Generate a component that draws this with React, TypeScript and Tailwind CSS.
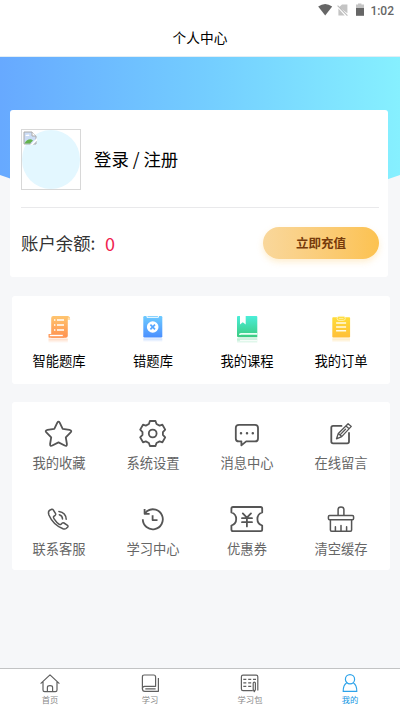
import type { ReactNode } from 'react';

interface MenuItem {
    label: string;
    icon: ReactNode;
}

interface TabItem extends MenuItem {
    active?: boolean;
}

const shortcuts: MenuItem[] = [
    {
        label: '智能题库',
        icon: (
            <svg width="40" height="32" viewBox="0 0 40 32">
                <defs>
                    <linearGradient id="orange" x1="0" y1="0" x2="0" y2="1">
                        <stop offset="0" stopColor="#ffc56f" />
                        <stop offset="1" stopColor="#ff914f" />
                    </linearGradient>
                    <linearGradient id="orangeFade" x1="0" y1="0" x2="0" y2="1">
                        <stop offset="0" stopColor="#ff914f" stopOpacity="0.35" />
                        <stop offset="1" stopColor="#ff914f" stopOpacity="0" />
                    </linearGradient>
                </defs>
                <path d="M9.5 24.6H28.8V29H9.5Z" fill="url(#orangeFade)" />
                <path d="M12.2 4Q12.2 2 14.2 2H29Q31.2 2.4 31.2 5.4H28.8V21.7Q28.8 23.7 26.8 23.7H12.2Z" fill="url(#orange)" />
                <path d="M28.8 5.4V3.6Q31 3 31.2 5.4Z" fill="#ffe0ad" />
                <rect x="9.5" y="20" width="15.8" height="3.7" rx="0.6" fill="#ff9a5b" />
                <path d="M10.8 21.5H23.8" stroke="#fff" strokeWidth="1.3" />
                <path d="M15 6h1.4M18 6h7M15 11h1.4M18 11h7M15 16h1.4M18 16h7" stroke="#fff" strokeWidth="1.6" />
            </svg>
        ),
    },
    {
        label: '错题库',
        icon: (
            <svg width="40" height="32" viewBox="0 0 40 32">
                <defs>
                    <linearGradient id="blue" x1="0" y1="0" x2="0" y2="1">
                        <stop offset="0" stopColor="#6ecbff" />
                        <stop offset="1" stopColor="#4a8fff" />
                    </linearGradient>
                    <linearGradient id="blueFade" x1="0" y1="0" x2="0" y2="1">
                        <stop offset="0" stopColor="#4a8fff" stopOpacity="0.3" />
                        <stop offset="1" stopColor="#4a8fff" stopOpacity="0" />
                    </linearGradient>
                </defs>
                <path d="M10.3 24.4H29.3V28H10.3Z" fill="url(#blueFade)" />
                <rect x="10.3" y="2" width="19" height="21.5" rx="1.2" fill="url(#blue)" />
                <path d="M14 2V3.3H25.4V2" fill="none" stroke="#fff" strokeWidth="1" />
                <circle cx="19.7" cy="13" r="5.8" fill="#fff" />
                <path d="M17.4 10.7L22 15.3M22 10.7L17.4 15.3" stroke="#58a7ff" strokeWidth="1.7" />
            </svg>
        ),
    },
    {
        label: '我的课程',
        icon: (
            <svg width="40" height="32" viewBox="0 0 40 32">
                <defs>
                    <linearGradient id="green" x1="0" y1="0" x2="0" y2="1">
                        <stop offset="0" stopColor="#4beed9" />
                        <stop offset="1" stopColor="#3bcb80" />
                    </linearGradient>
                    <linearGradient id="greenFade" x1="0" y1="0" x2="0" y2="1">
                        <stop offset="0" stopColor="#3bcb80" stopOpacity="0.4" />
                        <stop offset="1" stopColor="#3bcb80" stopOpacity="0" />
                    </linearGradient>
                </defs>
                <path d="M10 24.4H30.3V29.5H10Z" fill="url(#greenFade)" />
                <path d="M13 26.3H30.3" stroke="#fff" strokeWidth="1" />
                <path d="M11 2H29.3Q30.3 2 30.3 3V23.3H11.5Q10 23.3 10 21.8V3Q10 2 11 2Z" fill="url(#green)" />
                <path d="M13 2H18.7V10.4L15.8 8.2L13 10.4Z" fill="#fff" />
                <path d="M30.3 19.8H14Q12.8 19.8 12.8 21" stroke="#e9fff5" strokeWidth="1.7" fill="none" />
            </svg>
        ),
    },
    {
        label: '我的订单',
        icon: (
            <svg width="40" height="32" viewBox="0 0 40 32">
                <defs>
                    <linearGradient id="yellow" x1="0" y1="0" x2="0" y2="1">
                        <stop offset="0" stopColor="#ffdc38" />
                        <stop offset="1" stopColor="#ffbf38" />
                    </linearGradient>
                    <linearGradient id="yellowFade" x1="0" y1="0" x2="0" y2="1">
                        <stop offset="0" stopColor="#ffbf38" stopOpacity="0.35" />
                        <stop offset="1" stopColor="#ffbf38" stopOpacity="0" />
                    </linearGradient>
                </defs>
                <path d="M11.3 24.4H29V28.5H11.3Z" fill="url(#yellowFade)" />
                <rect x="11.3" y="3.2" width="17.8" height="20.4" rx="0.8" fill="url(#yellow)" />
                <rect x="16.1" y="2.4" width="8.2" height="4" rx="2" fill="#ffdc38" stroke="#fff3b8" strokeWidth="0.9" />
                <path d="M17.9 4.4h4.6" stroke="#fff3b8" strokeWidth="0.8" />
                <path d="M15.1 9H25.1M15.1 13H25.1M15.1 16.8H25.1" stroke="#fffbe6" strokeWidth="1.4" />
            </svg>
        ),
    },
];

const services: MenuItem[] = [
    {
        label: '我的收藏',
        icon: (
            <path d="M16.3 5.6Q17.5 3.6 18.7 5.6L21.7 11.9L28.5 12.9Q31.6 13.6 29.4 15.7L24.8 20.4L25.9 27Q26.1 29.7 23.7 28.5L17.5 25.4L11.3 28.5Q8.9 29.7 9.1 27L10.2 20.4L5.6 15.7Q3.4 13.6 6.5 12.9L13.3 11.9Z" />
        ),
    },
    {
        label: '系统设置',
        icon: (
            <g transform="translate(17.7 16.5)">
                <path d="M-3.8 -9.5L-2.8 -12.5H2.8L3.8 -9.5L6.9 -7.9L9.7 -8.8L12.5 -3.9L10.2 -1.4V1.4L12.5 3.9L9.7 8.8L6.9 7.9L3.8 9.5L2.8 12.5H-2.8L-3.8 9.5L-6.9 7.9L-9.7 8.8L-12.5 3.9L-10.2 1.4V-1.4L-12.5 -3.9L-9.7 -8.8L-6.9 -7.9Z" />
                <circle r="3.9" />
            </g>
        ),
    },
    {
        label: '消息中心',
        icon: (
            <>
                <path d="M10 7.8H26Q29 7.8 29 10.8V21.4Q29 24.4 26 24.4H17.2L12.4 28.4V24.4H10Q6.8 24.4 6.8 21.4V10.8Q6.8 7.8 10 7.8Z" />
                <path d="M12 16.2h.01M18 16.2h.01M23.8 16.2h.01" strokeWidth="2.5" />
            </>
        ),
    },
    {
        label: '在线留言',
        icon: (
            <>
                <path d="M18.5 8.9H10.1Q8.3 8.9 8.3 10.7V24.6Q8.3 26.4 10.1 26.4H24.2Q26 26.4 26 24.6V16" />
                <path d="M13.5 21.8L15.3 16.5L25.1 6.7L28.3 9.4L18.7 19.6ZM15.3 16.5L18.7 19.6M22.9 8.9L26.2 11.7M17.5 17.4L22.5 12.3" strokeWidth="1.3" />
            </>
        ),
    },
    {
        label: '联系客服',
        icon: (
            <g strokeWidth="1.5" transform="translate(-0.5 0)">
                <path d="M9.2 7.2L11.3 6.3Q12.3 6.1 12.8 7L15.1 10.6Q15.5 11.6 14.7 12.3L13 13.7Q12.8 14.6 13.6 15.8Q15.9 19.3 18.8 21.4Q19.8 21.9 20.6 21.2L21.8 20Q22.5 19.4 23.5 20L27 22.3Q28 23.1 27.3 24L25.6 25.5Q24.4 26.4 22.5 25.8Q12.5 21.7 8.4 12Q7.2 8.6 9.2 7.2Z" />
                <path d="M18.8 11.7Q22 12.6 22 16M18.4 8.4Q25.4 9.3 25.7 16.3" />
            </g>
        ),
    },
    {
        label: '学习中心',
        icon: (
            <g strokeLinecap="butt">
                <path d="M7.8 16.3A10 10 0 1 0 12.2 8L9.8 10.4" />
                <path d="M9.6 6V10.8H14.6" />
                <path d="M17.6 12.3V17.1H22.5" />
            </g>
        ),
    },
    {
        label: '优惠券',
        icon: (
            <>
                <path d="M4 4H31.6Q33.2 4 33.2 5.6V9.5Q28.4 11 28.4 16Q28.4 21 33.2 22.5V26.6Q33.2 28.2 31.6 28.2H4Q2.4 28.2 2.4 26.6V22.5Q7.2 21 7.2 16Q7.2 11 2.4 9.5V5.6Q2.4 4 4 4Z" />
                <path d="M13.8 10.4L17.9 14.7L22 10.4M13 15.2H23M13 19.2H23M17.9 14.7V23.4" />
            </>
        ),
    },
    {
        label: '清空缓存',
        icon: (
            <g strokeWidth="1.5" transform="translate(0.4 0)">
                <path d="M14.7 12.3V6.6Q14.7 4 17.6 4Q20.5 4 20.5 6.6V12.3" />
                <rect x="5" y="12.5" width="25.2" height="4.2" rx="1.2" />
                <path d="M7 16.8V27Q7 28.2 8.2 28.2H27Q28.2 28.2 28.2 27V16.8M12 28V23.8M17.6 28V22.6M23.2 28V23.8" />
            </g>
        ),
    },
];

const tabs: TabItem[] = [
    {
        label: '首页',
        icon: <path d="M2.6 10.6L12 1.9L21.4 10.6M5 8.6V17Q5 18.6 6.6 18.6H17.4Q19 18.6 19 17V8.6M9.4 18.4V14.4Q9.4 12.6 12 12.6Q14.6 12.6 14.6 14.4V18.4" />,
    },
    {
        label: '学习',
        icon: (
            <>
                <path d="M6.2 2H15.6Q17.6 2 17.6 4V13.3H6.6Q4.4 13.3 4.4 15.5V4Q4.4 2 6.2 2Z" />
                <path d="M4.4 15.4Q4.4 18.3 6.8 18.3H20.4V5M7.3 15.8H17.6" />
            </>
        ),
    },
    {
        label: '学习包',
        icon: (
            <>
                <path d="M14.8 17.6H5Q3.4 17.6 3.4 16V3.8Q3.4 2.2 5 2.2H18.2Q19.8 2.2 19.8 3.8V17.6" />
                <path d="M5.3 6.4h3M10.2 6.4h3M15 6.4h3M5.3 9.9h3M10.2 9.9h3M5.3 13.4h3M10.2 13.4h3" />
                <path d="M15.2 10.3Q15.2 9.2 16.3 9.2Q17.4 9.2 17.4 10.3V16.6L16.3 18.6L15.2 16.6Z" />
            </>
        ),
    },
    {
        label: '我的',
        icon: (
            <>
                <circle cx="12" cy="6.2" r="4.6" />
                <path d="M8.6 10.1Q5.2 12 5.2 18.4H18.8Q18.8 12 15.4 10.1" />
            </>
        ),
        active: true,
    },
];

function StatusBar() {
    return (
        <div className="flex h-5 items-center justify-end pr-[6px] text-[#666]">
            <svg width="48" height="14" viewBox="0 0 48 14" className="mr-1">
                <path d="M0.2 3.6Q7.2 -1.4 14.2 3.6L7.2 12.6Z" fill="#666" />
                <path d="M21 4.3L24 1.4H29.4V10.2ZM20.4 5.6L26.7 12.4H20.4Z" fill="#c4c4c4" />
                <path d="M19.6 2.6L29.4 12.6" stroke="#bbb" strokeWidth="1.1" />
                <path d="M40 0.4H43.4V1.6H46V5H38V1.6H40Z" fill="#c4c4c4" />
                <rect x="38" y="5" width="8" height="7.8" fill="#666" />
            </svg>
            <span className="pt-px font-[Roboto,sans-serif] text-[12px] leading-5 font-medium">1:02</span>
        </div>
    );
}

function BrokenImage() {
    return (
        <svg width="14" height="14" viewBox="0 0 14 14">
            <path d="M1 1H9L13 5V13H1Z" fill="#cbdcf5" stroke="#aaa" />
            <path d="M9 1V5H13" fill="#fff" stroke="#aaa" />
            <path d="M2.4 5Q3 3.2 4.4 3.8Q6 3 6.5 5Z" fill="#fff" />
            <path d="M1.5 12.5Q4 7.8 8.5 8.4L10 9.5L7 12.5Z" fill="#64b34e" />
            <path d="M7 14L14 7V9.5L9.5 14Z" fill="#fff" />
        </svg>
    );
}

function ProfileCard() {
    return (
        <section className="relative mt-[-107px] ml-[10px] h-[167px] w-[378px] rounded-[3px] bg-white pt-[19px] pr-[9px] pl-[11px]">
            <div className="flex h-[79px] items-start border-b border-[#e9e9eb]">
                <div className="h-[61px] w-[60px] border border-[#d8d8d8]">
                    <div className="h-full w-full rounded-full bg-[#e3f7ff]">
                        <div className="pt-px pl-px">
                            <BrokenImage />
                        </div>
                    </div>
                </div>
                <span className="ml-[13px] text-[17.4px] leading-[60px] text-black">登录 / 注册</span>
            </div>
            <div className="flex h-[70px] items-center justify-between">
                <div className="flex items-center text-[17.4px] text-[#333]">
                    <span className="w-[84px] whitespace-nowrap">账户余额:</span>
                    <span className="text-[18px] text-[#f0224f]">0</span>
                </div>
                <button className="h-8 w-[116px] rounded-full bg-linear-to-r from-[#f9d79b] to-[#fcc250] text-[12.5px] font-bold text-[#773b0b] shadow-[0_3px_6px_rgba(252,200,100,0.3)]">
                    立即充值
                </button>
            </div>
        </section>
    );
}

export default function App() {
    return (
        <div className="flex h-[710px] w-[400px] flex-col overflow-hidden bg-[#f6f7f9] font-['Noto_Sans_CJK_SC',sans-serif]">
            <header className="h-[57px] shrink-0 border-b border-[#e2eef5] bg-white">
                <StatusBar />
                <h1 className="text-center text-[13.7px] leading-[34px] text-black">个人中心</h1>
            </header>

            <main className="flex-1">
                <div className="h-[160px] bg-linear-to-r from-[#67a9ff] via-[#73ccff] to-[#86f0ff] [clip-path:circle(590px_at_50%_-437px)]" />
                <ProfileCard />

                <section className="mt-[19px] ml-3 grid h-[88px] w-[378px] grid-cols-4 rounded-[3px] bg-white pt-[18px] pr-[2px]">
                    {shortcuts.map((item) => (
                        <div key={item.label} className="flex flex-col items-center">
                            {item.icon}
                            <span className="mt-[5px] text-[13.3px] leading-5 text-black">{item.label}</span>
                        </div>
                    ))}
                </section>

                <section className="mt-[18px] ml-3 grid h-[168px] w-[378px] auto-rows-[86px] grid-cols-4 rounded-[3px] bg-white pt-[15px] pr-[2px]">
                    {services.map((item) => (
                        <div key={item.label} className="flex flex-col items-center">
                            <svg
                                width="36"
                                height="32"
                                viewBox="0 0 36 32"
                                fill="none"
                                stroke="#555"
                                strokeWidth="1.8"
                                strokeLinecap="round"
                                strokeLinejoin="round"
                            >
                                {item.icon}
                            </svg>
                            <span className="mt-1 text-[13.3px] leading-5 text-[#666]">{item.label}</span>
                        </div>
                    ))}
                </section>
            </main>

            <nav className="grid h-[42px] shrink-0 grid-cols-4 border-t border-[#c2c3c4] bg-white pt-1">
                {tabs.map((tab) => (
                    <div
                        key={tab.label}
                        className={`flex flex-col items-center ${tab.active ? 'text-[#1296e3]' : 'text-[#888]'}`}
                    >
                        <svg
                            width="24"
                            height="20"
                            viewBox="0 0 24 20"
                            fill="none"
                            stroke={tab.active ? '#2da3ea' : '#606060'}
                            strokeWidth="1.2"
                            strokeLinejoin="round"
                        >
                            {tab.icon}
                        </svg>
                        <span className="mt-px text-[8.3px] leading-[10px]">{tab.label}</span>
                    </div>
                ))}
            </nav>
        </div>
    );
}
